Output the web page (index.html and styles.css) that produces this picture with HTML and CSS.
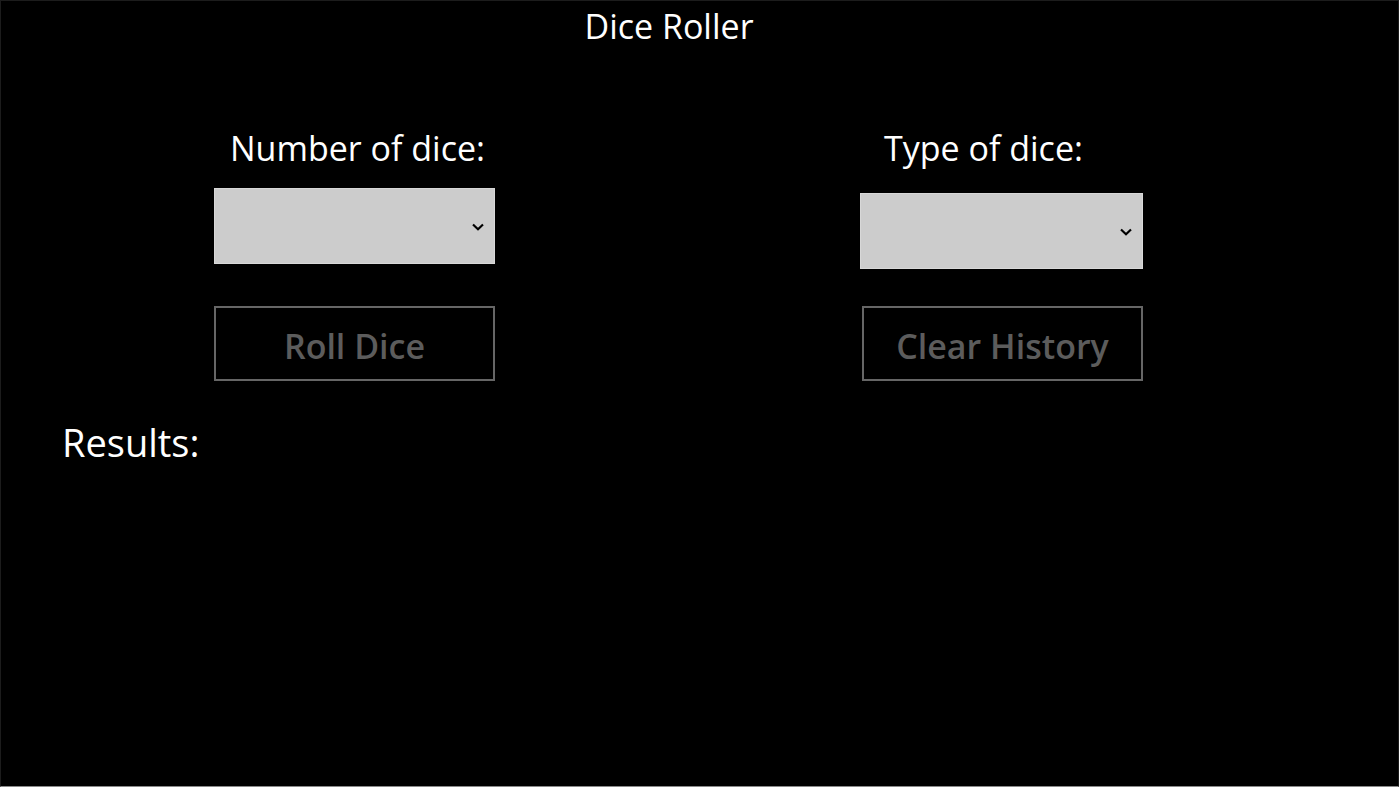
FILE: index.html
```html
<!DOCTYPE html>
<html lang="en">
<head>
<meta charset="utf-8">
<title>Dice Roller</title>
<link rel="stylesheet" href="styles.css">
</head>
<body>
<div class="app">
  <h1 class="title">Dice Roller</h1>
  <div class="controls">
    <div class="col col-left">
      <div class="label">Number of dice:</div>
      <div class="select">
        <svg class="chev" width="12" height="8" viewBox="0 0 12 8"><path d="M1 1.5 L6 6.2 L11 1.5" fill="none" stroke="#000" stroke-width="2.2"/></svg>
      </div>
      <button class="btn">Roll Dice</button>
    </div>
    <div class="col col-right">
      <div class="label">Type of dice:</div>
      <div class="select">
        <svg class="chev" width="12" height="8" viewBox="0 0 12 8"><path d="M1 1.5 L6 6.2 L11 1.5" fill="none" stroke="#000" stroke-width="2.2"/></svg>
      </div>
      <button class="btn">Clear History</button>
    </div>
  </div>
  <div class="results">Results:</div>
</div>
</body>
</html>
```

FILE: styles.css
```css
html, body {
  margin: 0;
  padding: 0;
  background: #000;
}
.app {
  box-sizing: border-box;
  width: 1399px;
  height: 787px;
  border-top: 1px solid #1c1c1c;
  border-left: 1px solid #1c1c1c;
  border-right: 1px solid #1c1c1c;
  border-bottom: 1px solid #8a8a8a;
  color: #fff;
  font-family: "Open Sans", "Noto Sans", sans-serif;
}
.title {
  margin: 0;
  padding: 3px 61px 0 0;
  font-size: 34px;
  font-weight: 400;
  line-height: 44px;
  text-align: center;
}
.controls {
  display: flex;
  padding: 78px 0 0 213px;
  gap: 365px;
}
.col {
  display: flex;
  flex-direction: column;
}
.col-left { width: 281px; }
.col-right { width: 283px; }
.label {
  font-size: 34px;
  line-height: 44px;
  height: 44px;
}
.col-left .label { text-align: center; padding-left: 6px; }
.col-right .label { padding-left: 24px; }
.select {
  box-sizing: border-box;
  height: 76px;
  background: #cccccc;
  border: 1px solid #d8d8d8;
  display: flex;
  align-items: center;
  justify-content: flex-end;
  padding: 2px 10px 0 0;
}
.col-left .select { margin-top: 18px; }
.col-right .select { margin-top: 23px; }
.chev { display: block; }
.btn {
  box-sizing: border-box;
  height: 75px;
  width: 281px;
  background: #000;
  border: 2px solid #666;
  color: #5c5c5c;
  font-family: "Open Sans", "Noto Sans", sans-serif;
  font-size: 34px;
  font-weight: 600;
  padding: 4px 0 0 0;
}
.col-left .btn { margin-top: 42px; }
.col-right .btn { margin-top: 37px; align-self: flex-end; }
.results {
  padding: 37px 0 0 61px;
  font-size: 38px;
  line-height: 48px;
}
```
